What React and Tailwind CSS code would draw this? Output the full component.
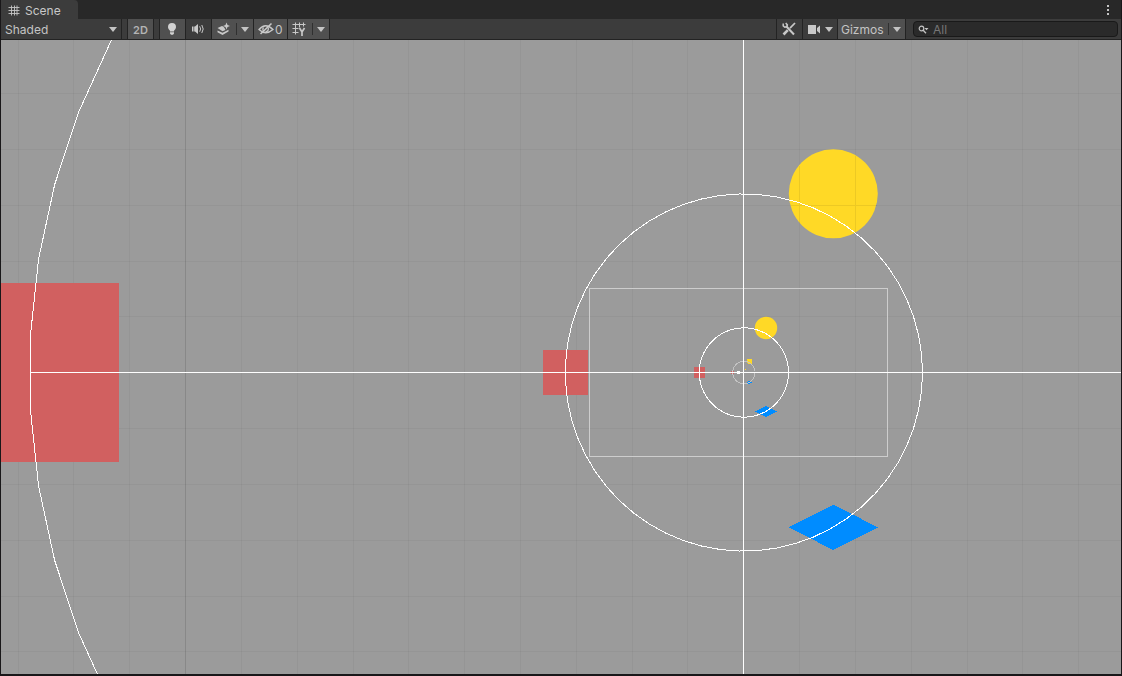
import React from "react";

const CX = 743.5;
const CY = 372.5;
const STEP = 55.82;

const columns = Array.from({ length: 21 }, (_, i) => i - 13).filter((i) => i !== 0);
const rows = Array.from({ length: 12 }, (_, i) => i - 6).filter((i) => i !== 0);

// A disc outline made of 59 straight segments that starts at angle zero.
function discPoints(radius) {
  return Array.from({ length: 59 }, (_, i) => {
    const a = (i * 2 * Math.PI) / 59;
    return `${(CX + 0.4 + radius * Math.cos(a)).toFixed(2)},${(CY + radius * Math.sin(a)).toFixed(2)}`;
  }).join(" ");
}

function Arrow() {
  return (
    <svg width="8" height="5" viewBox="0 0 8 5" fill="#c4c4c4" aria-hidden="true">
      <path d="M0 0h8L4 5z" />
    </svg>
  );
}

function HashIcon() {
  return (
    <svg width="12" height="12" viewBox="0 0 12 12" stroke="#c4c4c4" fill="none" aria-hidden="true" className="shrink-0">
      <path d="M3.5 0.500v10M6.5 0.500v10M9 0.500v10M0.500 2.500h11M0.500 5.500h11M0.500 8.500h11" opacity=".9" />
    </svg>
  );
}

function BulbIcon() {
  return (
    <svg width="16" height="16" viewBox="0 0 16 16" fill="#d2d2d2" aria-hidden="true">
      <path d="M8 2a4 4 0 0 0-4 4c0 1.600 1 2.500 1.700 3.300.3.400.3.900.3 1.200h4c0-.3 0-.8.3-1.200C11 8.500 12 7.600 12 6a4 4 0 0 0-4-4zM6 11.300h4v1.200l-1 1.200H7l-1-1.200z" />
    </svg>
  );
}

function AudioIcon() {
  return (
    <svg width="16" height="16" viewBox="0 0 16 16" fill="#c8c8c8" aria-hidden="true">
      <path d="M2 5.500h1.500v5H2zM4.200 5.500H5L8 3v10l-3-2.500h-.8z" />
      <path d="M9.700 5.300q1.800 2.700 0 5.400M11.800 4q2.800 4 0 8" fill="none" stroke="#c8c8c8" />
    </svg>
  );
}

function EffectsIcon() {
  return (
    <svg width="16" height="16" viewBox="0 0 16 16" fill="#c8c8c8" aria-hidden="true">
      <path d="M10.500 1.500l1 2.500 2.500 1-2.500 1-1 2.500-1-2.500L7 5l2.500-1z" />
      <path d="M1.500 7l4.500-2 1.500.7 1 1.300 1 2L6.500 10.200z" />
      <path d="M1.500 9.500l5 2.200 6-3v1.800L6.500 14l-5-2.800z" />
    </svg>
  );
}

function HiddenIcon() {
  return (
    <svg width="16" height="16" viewBox="0 0 16 16" fill="none" stroke="#c8c8c8" strokeWidth="1.300" aria-hidden="true" className="shrink-0">
      <path d="M1 8.500Q7.500 1 15 8.500Q7.500 15 1 8.500z" />
      <path d="M5.500 6.500a2.800 2.800 0 0 0 .5 4M10 6.500a2.800 2.800 0 0 1-2.500 4.200" />
      <path d="M13.500 2.500L2.500 13" strokeWidth="1.600" />
    </svg>
  );
}

function GridIcon() {
  return (
    <svg width="16" height="16" viewBox="0 0 16 16" fill="none" stroke="#c8c8c8" aria-hidden="true">
      <path d="M3.500 1.500v12M7.500 1.500v5M11.500 1.500v4M0.500 3.500h13M0.500 7.500h6M0.500 11.500h6" />
      <path d="M7.500 7l2.500 4 2.500-4M10 10.500v4.500" strokeWidth="1.700" />
    </svg>
  );
}

function ToolsIcon() {
  return (
    <svg width="16" height="16" viewBox="0 0 16 16" fill="none" stroke="#c8c8c8" aria-hidden="true">
      <path d="M5 5l8 8.500" strokeWidth="2" />
      <path d="M2.200 2.500v2.300l1.600 1.400 2-.4.600-1.900L4.700 2" strokeWidth="1.500" />
      <path d="M14 2l-5 5.200" strokeWidth="1.700" />
      <path d="M6.800 9.200L2.500 13.500" strokeWidth="2.600" />
    </svg>
  );
}

function CameraIcon() {
  return (
    <svg width="13" height="9" viewBox="0 0 13 9" fill="#c8c8c8" aria-hidden="true">
      <path d="M0 0h8v9H0zM9 3l3-2.500v8L9 6z" />
    </svg>
  );
}

function SearchIcon() {
  return (
    <svg width="11" height="9" viewBox="0 0 11 9" fill="none" stroke="#c4c4c4" aria-hidden="true" className="shrink-0">
      <circle cx="3.500" cy="3.500" r="2.300" strokeWidth="1.200" />
      <path d="M5.200 5.200l2.800 3" strokeWidth="1.300" />
      <path d="M6.500 3h4L8.500 5.200z" fill="#c4c4c4" stroke="none" />
    </svg>
  );
}

function ToolButton({ label, className, children }) {
  return (
    <button type="button" aria-label={label} className={`flex h-full items-center border-r border-[#232323] ${className}`}>
      {children}
    </button>
  );
}

function Divider() {
  return <span className="h-3 w-px bg-[#303030]" />;
}

function Toolbar() {
  return (
    <div className="flex h-5 shrink-0 items-stretch bg-[#3c3c3c] text-[12px] leading-4 text-[#c4c4c4]">
      <label className="grid w-[121px] items-center border-r border-[#232323]">
        <select aria-label="Draw mode" className="col-start-1 row-start-1 h-full appearance-none bg-transparent pl-1 pt-[2px] outline-none">
          <option>Shaded</option>
        </select>
        <span className="pointer-events-none col-start-1 row-start-1 justify-self-end pr-1">
          <Arrow />
        </span>
      </label>
      <span className="w-[6px] border-r border-[#232323]" />
      <ToolButton label="2D" className="w-[26px] justify-center bg-[#505050] pt-px text-[11px] font-semibold text-[#b4b4b4]">2D</ToolButton>
      <span className="w-[6px] border-r border-[#232323]" />
      <ToolButton label="Scene lighting" className="w-[26px] bg-[#505050] pl-1"><BulbIcon /></ToolButton>
      <ToolButton label="Scene audio" className="w-[26px] pl-1"><AudioIcon /></ToolButton>
      <ToolButton label="Effects" className="w-[42px] justify-between bg-[#505050] pl-1 pr-1"><EffectsIcon /><Divider /><Arrow /></ToolButton>
      <ToolButton label="Hidden objects" className="w-[34px] gap-px bg-[#505050] pl-1"><HiddenIcon /><span className="pt-[2px]">0</span></ToolButton>
      <ToolButton label="Grid" className="w-[42px] justify-between bg-[#505050] pl-1 pr-1"><GridIcon /><Divider /><Arrow /></ToolButton>
      <span className="flex-1 border-r border-[#232323]" />
      <ToolButton label="Component tools" className="w-[26px] pl-1"><ToolsIcon /></ToolButton>
      <ToolButton label="Camera settings" className="w-[35px] justify-between pl-[5px] pr-1"><CameraIcon /><Arrow /></ToolButton>
      <ToolButton label="Gizmos" className="w-[68px] justify-between bg-[#505050] pl-[3px] pr-1"><span className="pt-[2px]">Gizmos</span><span className="flex items-center gap-1"><Divider /><Arrow /></span></ToolButton>
      <label className="my-[2px] ml-[7px] mr-[3px] flex w-[205px] items-center gap-1 rounded border border-[#191919] bg-[#2a2a2a] pl-1">
        <SearchIcon />
        <input type="text" aria-label="Search scene" placeholder="All" className="w-full min-w-0 bg-transparent text-[12px] leading-3 outline-none placeholder:text-[#767676]" />
      </label>
    </div>
  );
}

function SceneCanvas() {
  return (
    <svg viewBox="1 40 1120 634" preserveAspectRatio="xMidYMid slice" className="block min-h-0 w-full flex-1 bg-[#9b9b9b]" role="img" aria-label="Scene view" shapeRendering="crispEdges">
      <g fill="#000">
        {columns.map((i) => (
          <rect key={i} x={Math.floor(CX + 0.3 + i * STEP)} y="40" width="1" height="634" opacity={i === -10 ? 0.12 : 0.035} />
        ))}
        {rows.map((i) => (
          <rect key={i} x="1" y={Math.floor(CY + 0.3 + i * STEP)} width="1120" height="1" opacity="0.035" />
        ))}
      </g>
      <g fill="#d16060">
        <path d="M1 283h118v179H1z" />
        <path d="M543 350h45v45h-45z" />
        <path d="M694 367h11v11h-11z" />
        <path d="M731 371h3v3h-3z" />
      </g>
      <g fill="#ffd926" shapeRendering="geometricPrecision">
        <circle cx="833.300" cy="193.800" r="44.500" />
        <circle cx="766" cy="328" r="11.200" />
        <path d="M747 359h5v5h-4v-1h-1zM745 369h1v1h-1z" />
      </g>
      <path d="M799 166h1v57h-1zM855 156h1v76h-1zM791 205h86v1h-86z" fill="#000" opacity="0.07" />
      <g fill="#008cff">
        <path d="M788.500 527.300L833.300 504.800 878 527.300 833.300 550z" />
        <path d="M755 411.500L766 405.800 777 411.500 766 417z" />
        <path d="M747 382h1v-1h3v1h1v1h-2v1h-2v-1h-1z" />
      </g>
      <g fill="none" stroke="#fff">
        <polygon points={discPoints(714.4)} />
        <polygon points={discPoints(178.6)} />
        <polygon points={discPoints(44.65)} />
        <polygon points={discPoints(11.16)} stroke="#c3c3c3" />
        <rect x="589.500" y="288.500" width="298" height="168" stroke="#cdcdcd" />
        <path d="M743.500 40v634M30 372.500h1091" />
      </g>
      <path d="M737 371h3v3h-3z" fill="#fff" />
    </svg>
  );
}

export default function App() {
  return (
    <main className="flex h-screen flex-col border-x border-b-2 border-[#191719] bg-[#191719] font-[Inter,sans-serif]">
      <header className="flex h-[19px] shrink-0 items-stretch justify-between bg-[#282828] text-[12px] leading-4 text-[#c8c8c8]">
        <button type="button" className="flex w-[77px] items-center gap-[5px] rounded-tr-sm bg-[#3c3c3c] pl-[7px] pt-[2px]">
          <HashIcon />
          Scene
        </button>
        <button type="button" aria-label="More options" className="px-3">
          <svg width="2" height="10" viewBox="0 0 2 10" fill="#c4c4c4" aria-hidden="true">
            <path d="M0 0h2v2H0zM0 4h2v2H0zM0 8h2v2H0z" />
          </svg>
        </button>
      </header>
      <div className="shrink-0 border-b border-[#232323]">
        <Toolbar />
      </div>
      <SceneCanvas />
    </main>
  );
}
